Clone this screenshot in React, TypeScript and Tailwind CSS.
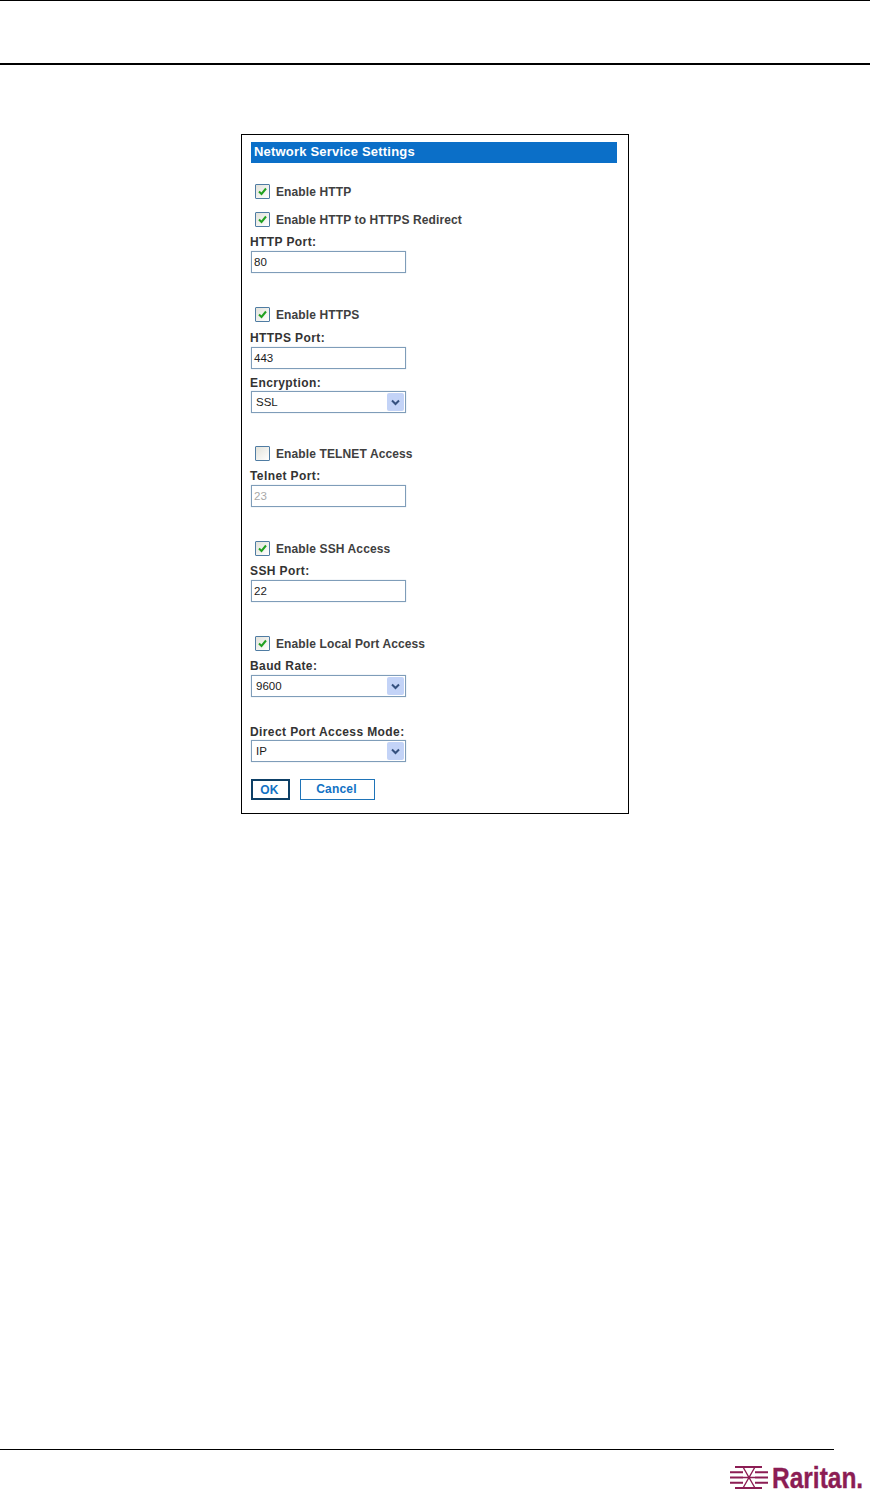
const font = "font-['Liberation_Sans',Arial,sans-serif]";

function CheckRow({ label, checked = true, className = "" }: { label: string; checked?: boolean; className?: string }) {
  return (
    <div className={`flex h-4 items-center pl-1 ${className}`}>
      <div className="-mt-[2px] flex h-[15px] w-[15px] items-center justify-center rounded-[1px] border border-[#4f7ca3] bg-gradient-to-br from-[#e2e2da] to-white">
        {checked && (
          <svg width="11" height="11" viewBox="0 0 11 11" fill="none">
            <path d="M2 5.5 L4.5 8 L9 2.5" stroke="#21a121" strokeWidth="2" />
          </svg>
        )}
      </div>
      <span className="ml-[6px] text-[12px] font-bold leading-4 tracking-[0.12px] text-[#404040]">{label}</span>
    </div>
  );
}

function FieldLabel({ label, className = "" }: { label: string; className?: string }) {
  return <div className={`-ml-px h-[14px] text-[12px] font-bold leading-[14px] tracking-[0.4px] text-[#333333] ${className}`}>{label}</div>;
}

function TextBox({ value, disabled = false, className = "" }: { value: string; disabled?: boolean; className?: string }) {
  return (
    <div className={`flex h-[22px] w-[155px] items-center border border-[#7f9db9] pl-[2px] pt-px text-[11.5px] shadow-[0_0_1px_#b8c8d8] ${disabled ? "text-[#a8a8a8]" : "text-[#1a1a1a]"} ${className}`}>
      {value}
    </div>
  );
}

function SelectBox({ value, className = "" }: { value: string; className?: string }) {
  return (
    <div className={`flex h-[22px] w-[155px] items-center justify-between border border-[#7f9db9] pl-1 pr-px text-[11.5px] text-[#1a1a1a] shadow-[0_0_1px_#b8c8d8] ${className}`}>
      <span className="pt-px">{value}</span>
      <div className="flex h-[18px] w-[17px] items-center justify-center rounded-[2px] bg-[#c3d3f7]">
        <svg width="9" height="7" viewBox="0 0 9 7" fill="none">
          <path d="M1 1.5 L4.5 5 L8 1.5" stroke="#35517f" strokeWidth="2" />
        </svg>
      </div>
    </div>
  );
}

function Logo() {
  return (
    <svg width="141" height="34" viewBox="0 0 141 34" fill="none">
      <g stroke="#8c1d54" strokeWidth="2.2">
        <path d="M7 3 H34 M7 24 H34" />
        <path d="M2 8.25 H15 M27 8.25 H40" />
        <path d="M2 13.5 H15 M27 13.5 H40" />
        <path d="M2 18.75 H15 M27 18.75 H40" />
        <path d="M15 3 L27 24 M27 3 L15 24 M15 13.5 H27" strokeWidth="1.4" />
      </g>
      <text transform="translate(44 24) scale(1 1.24)" fontSize="24.5" fontWeight="700" fill="#8c1d54" stroke="#8c1d54" strokeWidth="0.3">
        Raritan.
      </text>
    </svg>
  );
}

export default function App() {
  return (
    <div className={`relative flex h-[1499px] w-[870px] flex-col overflow-hidden bg-white ${font}`}>
      <div className="h-px bg-black" />
      <div className="mt-[62px] h-[2px] bg-black" />

      <div className="ml-[241px] mt-[69px] h-[680px] w-[388px] border border-black px-[9px] pt-[7px]">
        <div className="flex h-[21px] w-[366px] items-center bg-[#0b6fc8] pb-px pl-[3px] text-[13px] font-bold tracking-[0.2px] text-white">
          Network Service Settings
        </div>

        <CheckRow label="Enable HTTP" className="mt-[21px]" />
        <CheckRow label="Enable HTTP to HTTPS Redirect" className="mt-3" />
        <FieldLabel label="HTTP Port:" className="mt-[7px]" />
        <TextBox value="80" className="mt-[2px]" />

        <CheckRow label="Enable HTTPS" className="mt-[34px]" />
        <FieldLabel label="HTTPS Port:" className="mt-2" />
        <TextBox value="443" className="mt-[2px]" />
        <FieldLabel label="Encryption:" className="mt-[7px]" />
        <SelectBox value="SSL" className="mt-px" />

        <CheckRow label="Enable TELNET Access" checked={false} className="mt-[33px]" />
        <FieldLabel label="Telnet Port:" className="mt-[7px]" />
        <TextBox value="23" disabled className="mt-[2px]" />

        <CheckRow label="Enable SSH Access" className="mt-[34px]" />
        <FieldLabel label="SSH Port:" className="mt-[7px]" />
        <TextBox value="22" className="mt-[2px]" />

        <CheckRow label="Enable Local Port Access" className="mt-[34px]" />
        <FieldLabel label="Baud Rate:" className="mt-[7px]" />
        <SelectBox value="9600" className="mt-[2px]" />

        <FieldLabel label="Direct Port Access Mode:" className="mt-7" />
        <SelectBox value="IP" className="mt-px" />

        <div className="mt-[17px] flex gap-[10px]">
          <button className="h-[21px] w-[39px] border-2 border-[#0d3f66] pb-[2px] pr-[2px] text-[12px] font-bold tracking-[0.2px] text-[#1272c4]">OK</button>
          <button className="h-[21px] w-[75px] border border-[#1f74b8] pb-[2px] pr-[2px] text-[12px] font-bold tracking-[0.2px] text-[#1272c4]">Cancel</button>
        </div>
      </div>

      <div className="mt-[635px] h-px w-[834px] bg-black" />
      <div className="mt-[14px] flex justify-end pr-px">
        <Logo />
      </div>
    </div>
  );
}
